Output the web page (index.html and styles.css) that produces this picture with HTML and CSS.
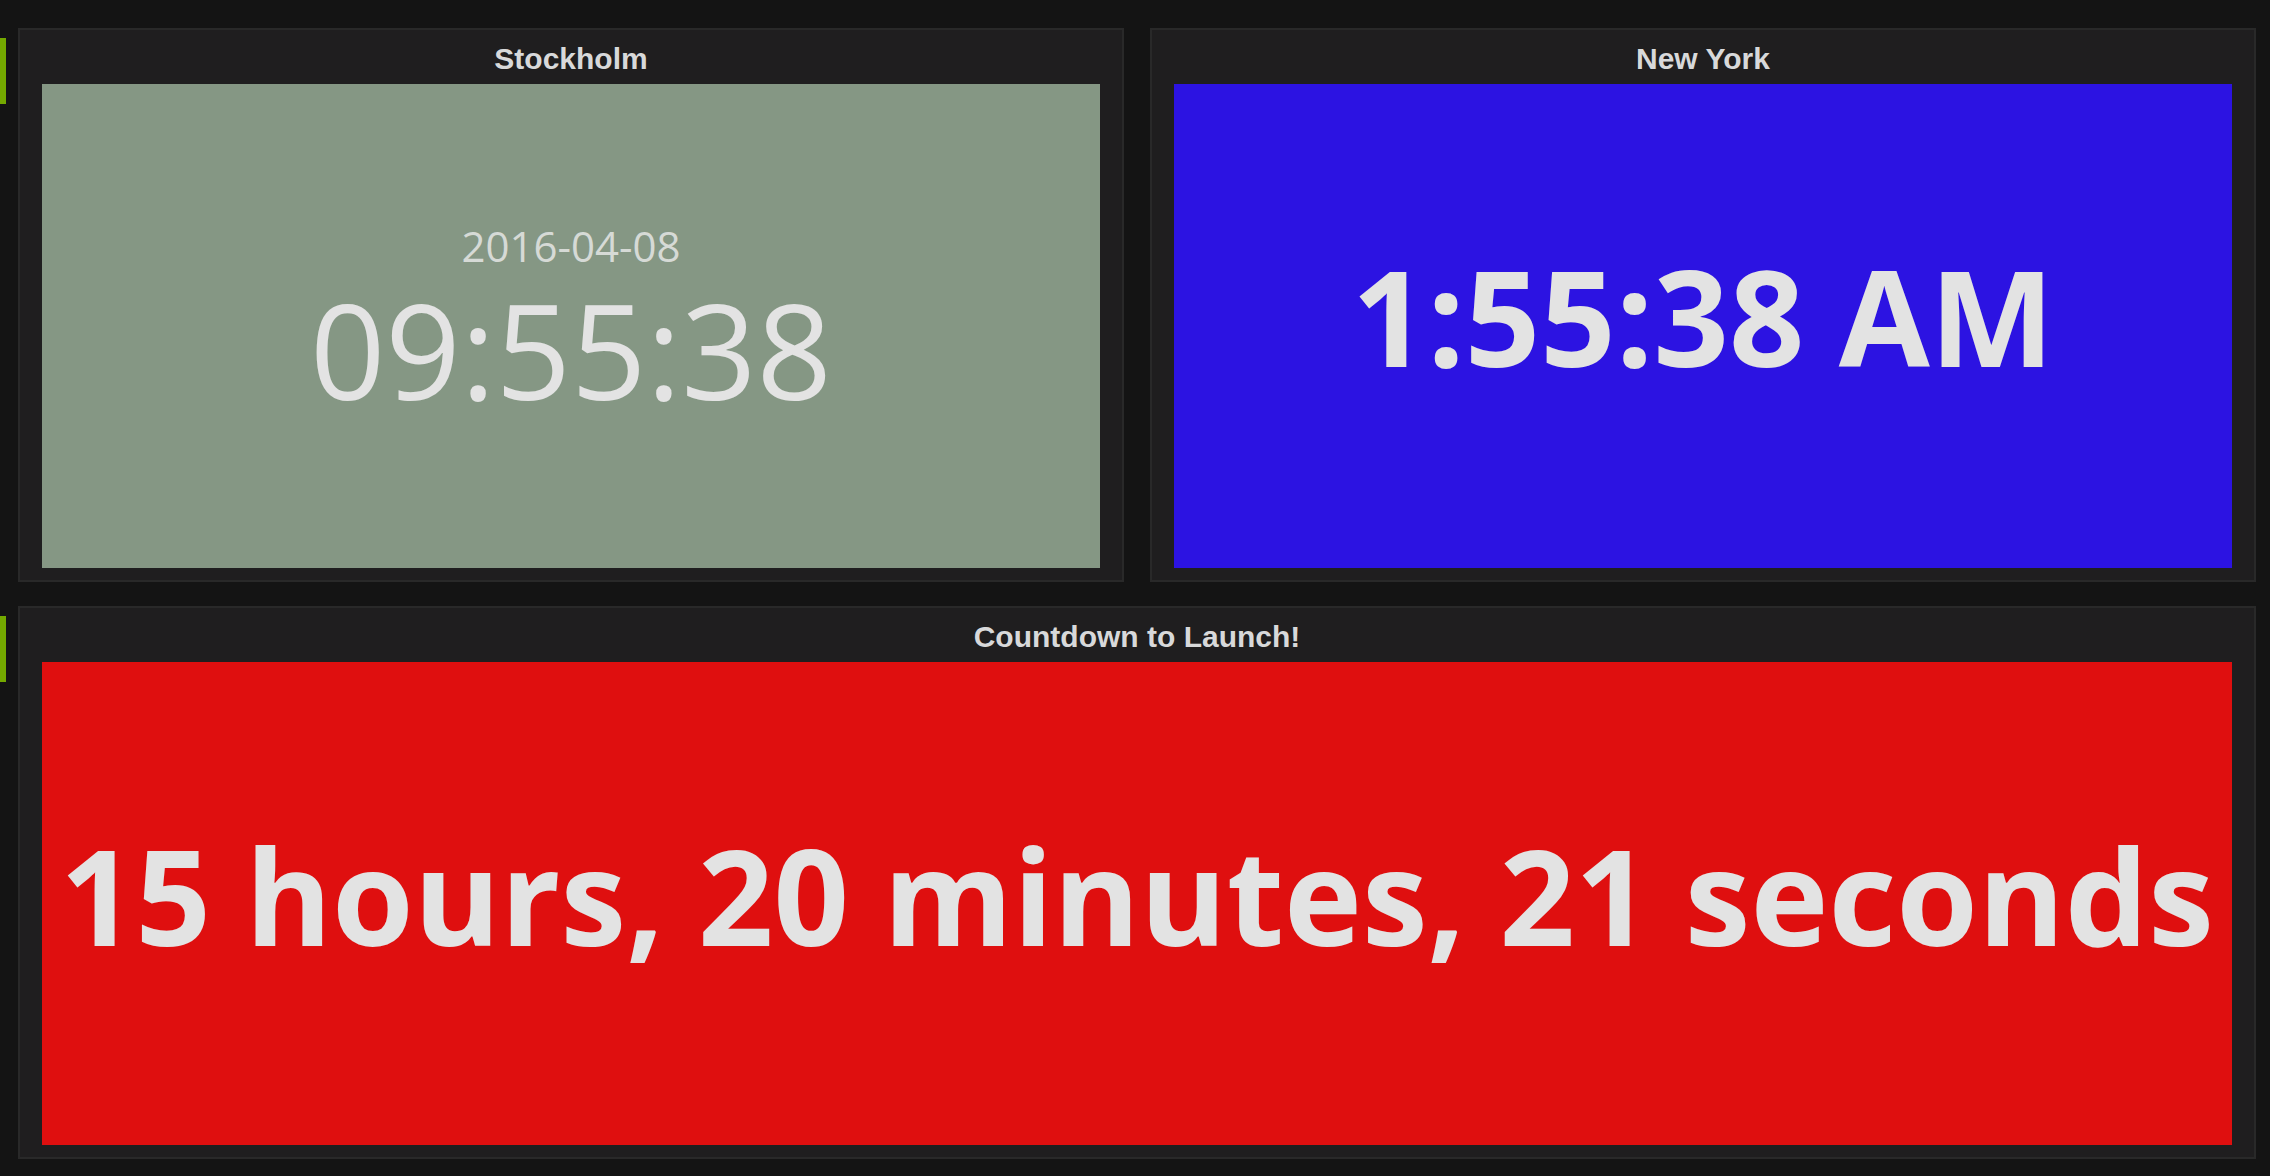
FILE: index.html
```html
<!DOCTYPE html>
<html lang="en">
<head>
<meta charset="utf-8">
<title>Clocks</title>
<link rel="stylesheet" href="styles.css">
</head>
<body>
<div class="dash">
  <div class="row">
    <div class="row-marker"></div>
    <div class="panels">
      <section class="panel">
        <h2 class="panel-title">Stockholm</h2>
        <div class="panel-body sthlm">
          <div class="clock-date">2016-04-08</div>
          <div class="clock-time">09:55:38</div>
        </div>
      </section>
      <section class="panel">
        <h2 class="panel-title">New York</h2>
        <div class="panel-body nyc">
          <div class="big">1:55:38 AM</div>
        </div>
      </section>
    </div>
  </div>
  <div class="row row-bottom">
    <div class="row-marker"></div>
    <div class="panels">
      <section class="panel">
        <h2 class="panel-title">Countdown to Launch!</h2>
        <div class="panel-body countdown">
          <div class="big cd-text">15 hours, 20 minutes, 21 seconds</div>
        </div>
      </section>
    </div>
  </div>
</div>
</body>
</html>
```
FILE: styles.css
```css
html, body {
  margin: 0;
  background: #141414;
  font-family: "Open Sans", "DejaVu Sans", sans-serif;
}

.dash {
  padding: 28px 14px 17px 0;
  display: flex;
  flex-direction: column;
  gap: 24px;
}

.row {
  display: flex;
  gap: 12px;
}

.row-marker {
  flex: none;
  width: 6px;
  height: 66px;
  margin-top: 10px;
  background: #74a900;
}

.panels {
  flex: 1;
  display: flex;
  gap: 26px;
}

.panel {
  flex: 1;
  box-sizing: border-box;
  height: 554px;
  border: 2px solid #292929;
  background: #1f1e1f;
  padding: 0 22px 12px;
  display: flex;
  flex-direction: column;
}

.row-bottom .panel {
  height: 553px;
}

.panel-title {
  margin: 0;
  height: 54px;
  box-sizing: border-box;
  padding-top: 4px;
  line-height: 50px;
  font-family: "Liberation Sans", Arial, sans-serif;
  font-weight: 700;
  font-size: 30px;
  color: #d8d9da;
  text-align: center;
}

.panel-body {
  flex: 1;
  display: flex;
  flex-direction: column;
  align-items: center;
  justify-content: center;
  color: #e3e3e3;
  overflow: hidden;
}

.sthlm {
  background: #859784;
  padding-bottom: 12px;
  gap: 16px;
}

.clock-date {
  font-size: 42px;
  line-height: 1;
  color: #d6dad6;
}

.clock-time {
  font-size: 132px;
  line-height: 1;
  font-weight: 400;
}

.nyc {
  background: #2c13e2;
  padding-bottom: 20px;
}

.big {
  font-weight: 700;
  font-size: 132px;
  line-height: 1;
  white-space: nowrap;
}

.countdown {
  background: #df0f0f;
  padding-bottom: 17px;
}
```
